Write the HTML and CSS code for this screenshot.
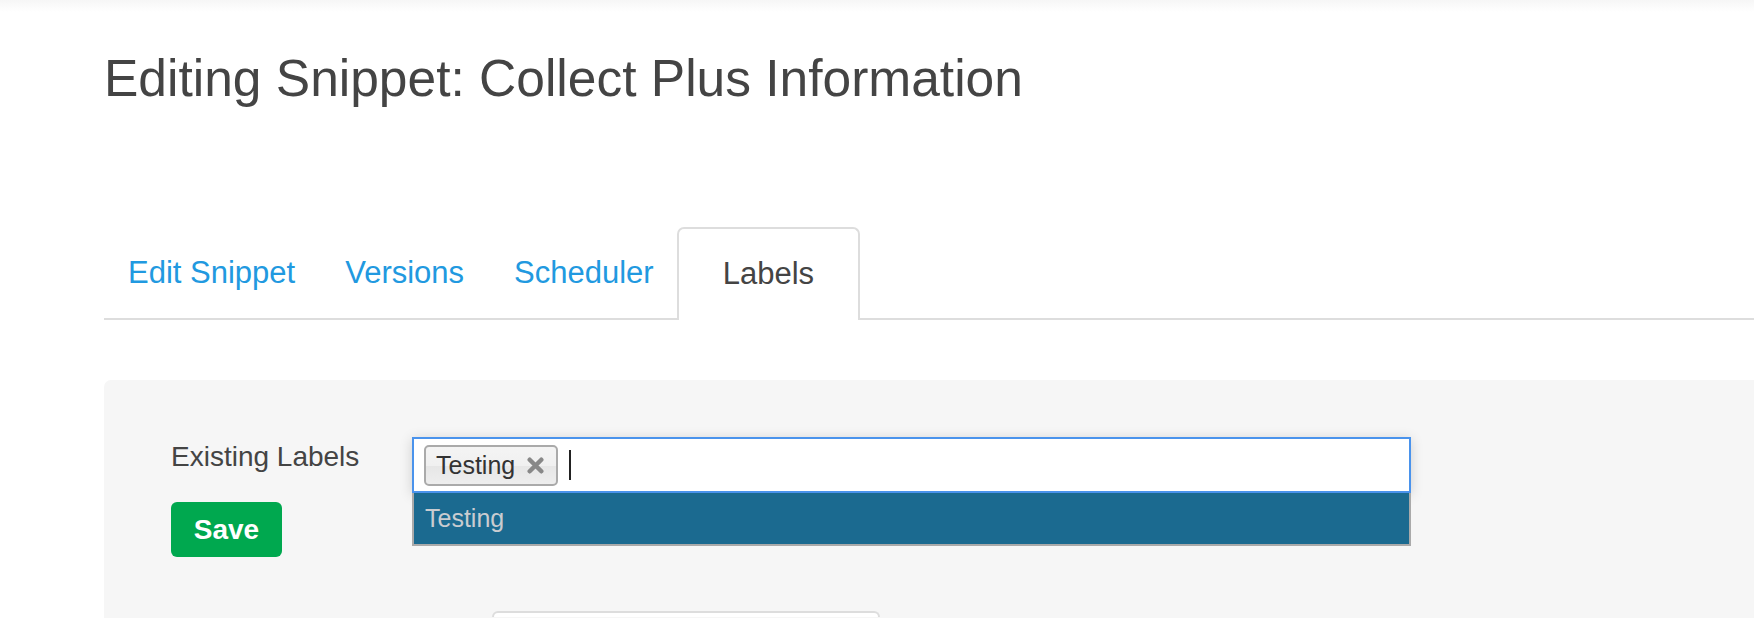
FILE: index.html
```html
<!DOCTYPE html>
<html>
<head>
<meta charset="utf-8">
<title>Editing Snippet</title>
<link rel="stylesheet" href="styles.css">
</head>
<body>
<div class="topshade"></div>
<main class="page">
  <h1 class="title">Editing Snippet: Collect Plus Information</h1>
  <ul class="tabs">
    <li class="tab"><a href="#">Edit Snippet</a></li>
    <li class="tab"><a href="#">Versions</a></li>
    <li class="tab"><a href="#">Scheduler</a></li>
    <li class="tab active"><a href="#">Labels</a></li>
  </ul>
  <section class="panel">
    <div class="row">
      <div class="labelcol">
        <label class="fieldlabel">Existing Labels</label>
        <button class="save">Save</button>
      </div>
      <div class="selectwrap">
        <div class="select">
          <span class="tag">Testing <svg class="tagx" viewBox="0 0 18 16" width="19" height="17"><path d="M3.5 2.5 L14.5 13.5 M14.5 2.5 L3.5 13.5" stroke="#888" stroke-width="4.2" stroke-linecap="round"/></svg></span>
          <span class="caret"></span>
        </div>
        <div class="dropdown">
          <div class="option">Testing</div>
        </div>
      </div>
    </div>
    <div class="row2">
      <div class="box"></div>
    </div>
  </section>
</main>
</body>
</html>
```
FILE: styles.css
```css
* { box-sizing: border-box; }
html, body { margin: 0; padding: 0; background: #fff; }
body {
  font-family: "Liberation Sans", Arial, Helvetica, sans-serif;
  color: #444;
  height: 618px;
  overflow: hidden;
}
.topshade {
  height: 12px;
  background: linear-gradient(#f6f6f6, #fff);
}
.page {
  padding-left: 104px;
}
.title {
  margin: 0;
  padding-top: 36px;
  font-size: 51.5px;
  line-height: 60px;
  font-weight: normal;
  color: #444;
}
.tabs {
  list-style: none;
  margin: 119px 0 0 0;
  padding: 0;
  display: flex;
  border-bottom: 2px solid #ddd;
  height: 93px;
}
.tab a {
  display: block;
  height: 91px;
  line-height: 91px;
  padding: 0 25px;
  font-size: 31px;
  color: #2199e0;
  text-decoration: none;
}
.tab:first-child a { padding-left: 24px; }
.tab.active a {
  color: #444;
  background: #fff;
  border: 2px solid #ddd;
  border-bottom: none;
  border-radius: 7px 7px 0 0;
  height: 93px;
  margin-bottom: -2px;
  margin-left: -2px;
  padding: 0 44px;
  line-height: 89px;
}
.panel {
  margin-top: 60px;
  background: #f6f6f6;
  border-radius: 7px 0 0 0;
  padding: 57px 0 0 67px;
  height: 238px;
  overflow: hidden;
}
.row {
  display: flex;
  align-items: flex-start;
}
.labelcol {
  width: 241px;
  display: flex;
  flex-direction: column;
  align-items: flex-start;
}
.fieldlabel {
  font-size: 28px;
  line-height: 32px;
  margin-top: 4px;
  color: #444;
}
.save {
  margin-top: 29px;
  width: 111px;
  height: 55px;
  border: none;
  border-radius: 6px;
  background: #00a84f;
  color: #fff;
  font-family: "Liberation Sans", Arial, sans-serif;
  font-weight: bold;
  font-size: 28px;
  padding: 0;
}
.selectwrap {
  position: relative;
  width: 999px;
  box-shadow: 0 2px 12px rgba(0, 0, 0, 0.16);
}
.select {
  height: 56px;
  background: #fff;
  border: 2px solid #4a93ec;
  display: flex;
  align-items: center;
  padding-left: 10px;
}
.tag {
  display: inline-flex;
  align-items: center;
  height: 41px;
  padding: 0 11px 0 10px;
  border: 2px solid #aaa;
  border-radius: 5px;
  background: linear-gradient(#f4f4f4 0%, #f0f0f0 50%, #e6e6e6 52%, #eee 100%);
  font-size: 25px;
  color: #333;
  gap: 11px;
}
.tagx { display: block; }
.caret {
  display: block;
  width: 2px;
  height: 30px;
  background: #222;
  margin-left: 11px;
}
.dropdown {
  position: absolute;
  left: 0;
  right: 0;
  top: 56px;
  height: 53px;
  background: #1b6a90;
  border: 2px solid #aaa;
  border-top: none;
}
.option {
  color: #c9ccd0;
  font-size: 25px;
  line-height: 50px;
  padding-left: 11px;
}
.row2 {
  margin-top: 54px;
  padding-left: 321px;
}
.box {
  width: 388px;
  height: 6px;
  background: #fff;
  border: 2px solid #ddd;
  border-bottom: none;
  border-radius: 7px 7px 0 0;
}
```
